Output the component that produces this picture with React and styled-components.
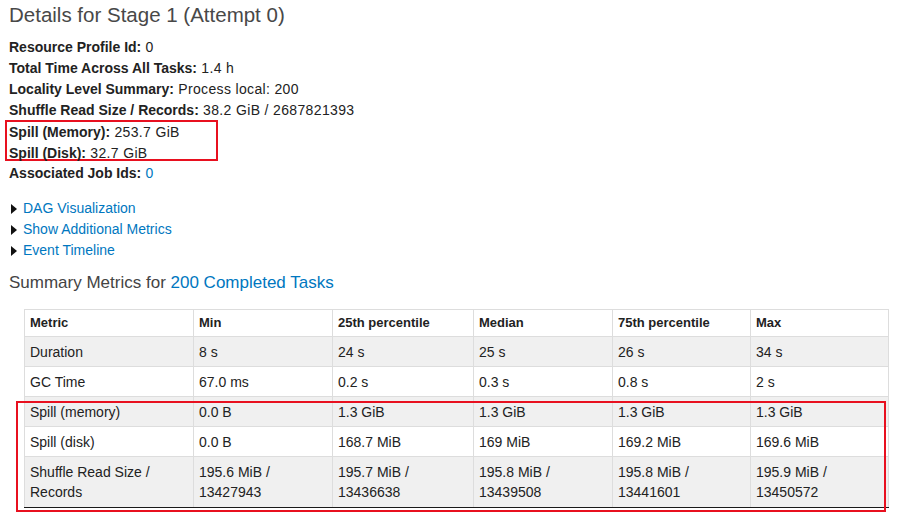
import React from "react";
import styled, { createGlobalStyle } from "styled-components";

const GlobalStyle = createGlobalStyle`
  html, body {
    margin: 0;
    background: #ffffff;
    font-family: "Liberation Sans", Arial, sans-serif;
    color: #333333;
  }
`;

const summary = [
  { label: "Resource Profile Id:", value: "0" },
  { label: "Total Time Across All Tasks:", value: "1.4 h" },
  { label: "Locality Level Summary:", value: "Process local: 200" },
  { label: "Shuffle Read Size / Records:", value: "38.2 GiB / 2687821393" },
];

const spills = [
  { label: "Spill (Memory):", value: "253.7 GiB" },
  { label: "Spill (Disk):", value: "32.7 GiB" },
];

const toggles = ["DAG Visualization", "Show Additional Metrics", "Event Timeline"];

const columns = ["Metric", "Min", "25th percentile", "Median", "75th percentile", "Max"];

const rows = [
  ["Duration", "8 s", "24 s", "25 s", "26 s", "34 s"],
  ["GC Time", "67.0 ms", "0.2 s", "0.3 s", "0.8 s", "2 s"],
  ["Spill (memory)", "0.0 B", "1.3 GiB", "1.3 GiB", "1.3 GiB", "1.3 GiB"],
  ["Spill (disk)", "0.0 B", "168.7 MiB", "169 MiB", "169.2 MiB", "169.6 MiB"],
  [
    "Shuffle Read Size / Records",
    "195.6 MiB / 13427943",
    "195.7 MiB / 13436638",
    "195.8 MiB / 13439508",
    "195.8 MiB / 13441601",
    "195.9 MiB / 13450572",
  ],
];

const widths = [169, 139, 141, 139, 138, 138];

const Line = ({ label, children }) => (
  <InfoItem>
    <strong>{label}</strong>
    <Value> {children}</Value>
  </InfoItem>
);

export default function App() {
  return (
    <>
      <GlobalStyle />
      <Page>
        <Title>Details for Stage 1 (Attempt 0)</Title>
        <InfoList>
          {summary.map((s) => (
            <Line key={s.label} label={s.label}>
              {s.value}
            </Line>
          ))}
          <Highlight>
            {spills.map((s) => (
              <Line key={s.label} label={s.label}>
                {s.value}
              </Line>
            ))}
          </Highlight>
          <Line label="Associated Job Ids:">
            <Link>0</Link>
          </Line>
        </InfoList>

        <ToggleList>
          {toggles.map((t) => (
            <Toggle key={t}>
              <Arrow />
              <Link>{t}</Link>
            </Toggle>
          ))}
        </ToggleList>

        <SubTitle>
          Summary Metrics for <Link>200 Completed Tasks</Link>
        </SubTitle>

        <TableWrap>
          <Table>
            <colgroup>
              {widths.map((w, i) => (
                <col key={i} style={{ width: w }} />
              ))}
            </colgroup>
            <thead>
              <tr>
                {columns.map((c) => (
                  <Th key={c}>{c}</Th>
                ))}
              </tr>
            </thead>
            <tbody>
              {rows.map((r, i) => (
                <Tr key={r[0]} striped={i % 2 === 0} tall={i === rows.length - 1}>
                  {r.map((cell, j) => (
                    <Td key={j}>{cell}</Td>
                  ))}
                </Tr>
              ))}
            </tbody>
          </Table>
          <TableMark />
        </TableWrap>
      </Page>
    </>
  );
}

const Page = styled.div`
  padding: 0 9px 6px;
  font-size: 14px;
  line-height: 21px;
`;

const Title = styled.h3`
  margin: 0;
  padding-top: 1px;
  font-size: 20.5px;
  font-weight: 300;
  line-height: 28px;
  color: #484848;
`;

const InfoList = styled.ul`
  list-style: none;
  margin: 8px 0 0;
  padding: 0;
`;

const InfoItem = styled.li`
  height: 21px;
  white-space: nowrap;
  color: #222222;

  strong {
    font-weight: 700;
  }
`;

const Value = styled.span`
  letter-spacing: 0.35px;
`;

const Highlight = styled.div`
  width: 207px;
  height: 37px;
  margin: -1px 0 2px -4px;
  padding-left: 2px;
  border: 2px solid #e8101f;
`;

const Link = styled.a`
  color: #0077c0;
  text-decoration: none;
  cursor: pointer;
`;

const ToggleList = styled.div`
  margin-top: 14px;
`;

const Toggle = styled.div`
  display: flex;
  align-items: center;
  height: 21px;
  gap: 6px;
  padding-left: 2px;
`;

const Arrow = styled.span`
  width: 0;
  height: 0;
  border-top: 5px solid transparent;
  border-bottom: 5px solid transparent;
  border-left: 6px solid #111111;
`;

const SubTitle = styled.h4`
  margin: 11px 0 0;
  font-size: 17px;
  font-weight: 300;
  line-height: 22px;
  color: #444444;
`;

const TableWrap = styled.div`
  position: relative;
  margin: 15px 0 0 15px;
  width: 864px;
`;

const Table = styled.table`
  width: 864px;
  table-layout: fixed;
  border-collapse: collapse;
  font-size: 14px;
  line-height: 20px;
  color: #222222;

  tbody tr:last-child td {
    border-bottom: 1px solid #1a1a1a;
  }
`;

const Th = styled.th`
  text-align: left;
  font-weight: 700;
  padding: 3px 5px;
  border: 1px solid #dddddd;
  font-size: 13px;
`;

const Tr = styled.tr`
  background: ${(p) => (p.striped ? "#f0f0f0" : "#ffffff")};

  td {
    padding-bottom: ${(p) => (p.tall ? "5px" : "4px")};
  }
`;

const Td = styled.td`
  padding: 5px 5px 4px;
  border: 1px solid #dddddd;
  vertical-align: top;
`;

const TableMark = styled.div`
  position: absolute;
  left: -8px;
  top: 92px;
  width: 866px;
  height: 107px;
  border: 2px solid #e8101f;
  pointer-events: none;
`;
